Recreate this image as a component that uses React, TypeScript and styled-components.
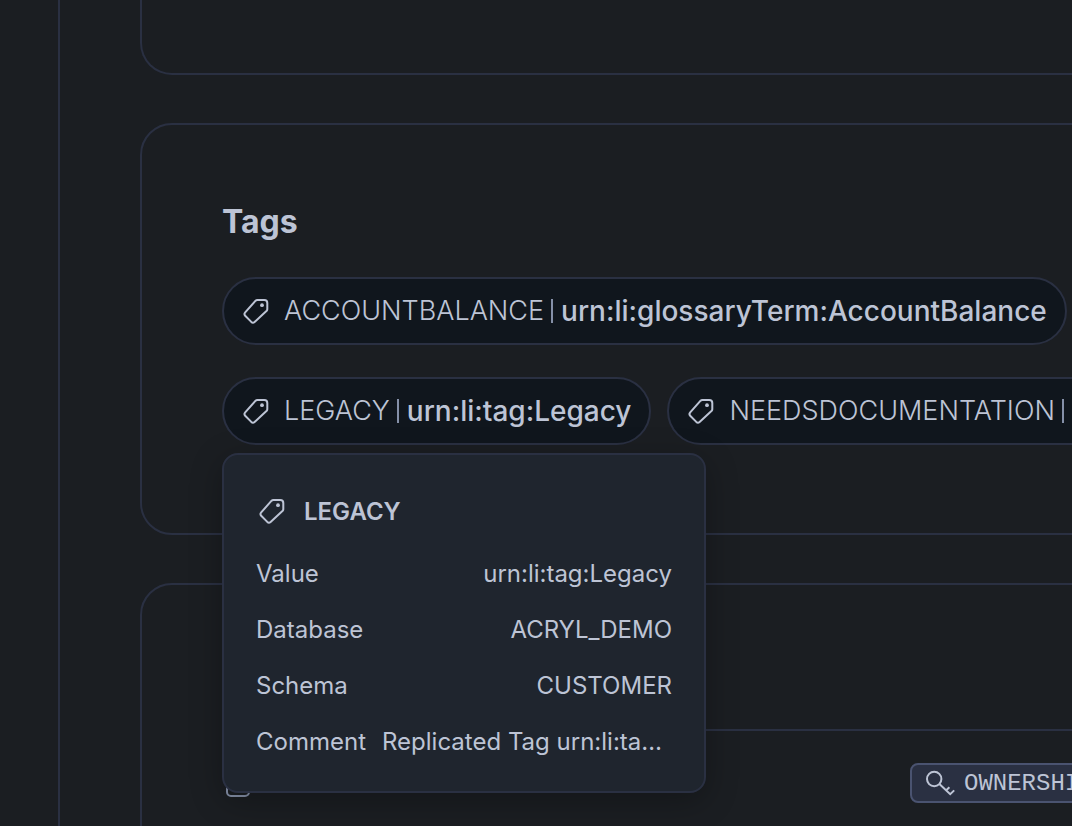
import React from 'react';
import styled, { createGlobalStyle } from 'styled-components';

const GlobalStyle = createGlobalStyle`
  *, *::before, *::after { box-sizing: border-box; }
  html, body, #root { height: 100%; }
  body {
    margin: 0;
    overflow: hidden;
    background: #1b1e22;
    color: #bdc4d5;
    font-family: Inter, "Liberation Sans", sans-serif;
  }
`;

const Shell = styled.div`
  display: grid;
  grid-template-columns: 60px minmax(0, 1fr);
  height: 100%;
  overflow: hidden;
`;

const Rail = styled.nav`
  border-right: 2px solid #2a3042;
`;

const Content = styled.main`
  display: flex;
  flex-direction: column;
  gap: 48px;
  padding-left: 80px;
  margin-right: -320px;
`;

const Card = styled.section<{ $cut?: 'top' }>`
  flex: none;
  border: 2px solid #2a3042;
  border-radius: 32px;
  ${({ $cut }) => $cut === 'top' && 'height: 75px; border-top: 0; border-radius: 0 0 32px 32px;'}
`;

const TagsCard = styled(Card)`
  padding: 76px 80px 88px;
`;

const PrivilegesCard = styled(Card)`
  padding: 0 80px 80px;
`;

const Title = styled.h2`
  margin: 0 0 34px;
  font-size: 32px;
  line-height: 42px;
  font-weight: 700;
`;

const TagRow = styled.div`
  display: flex;
  gap: 16px;
  & + & { margin-top: 32px; }
`;

const TagAnchor = styled.div`
  position: relative;
  flex: none;
`;

const Pill = styled.button`
  display: flex;
  align-items: center;
  height: 68px;
  padding: 0 18px;
  border: 2px solid #2a3042;
  border-radius: 34px;
  background: #10161d;
  color: inherit;
  font: inherit;
  white-space: nowrap;
`;

const PillName = styled.span`
  margin-left: 14px;
  font-size: 27px;
  line-height: 32px;
  font-weight: 300;
`;

const Divider = styled.span`
  width: 2px;
  height: 24px;
  margin: 0 8px 0 7px;
  background: #8590a8;
`;

const PillValue = styled.span`
  font-size: 28px;
  line-height: 32px;
  font-weight: 500;
`;

const Popover = styled.div`
  position: absolute;
  top: 76px;
  left: 0;
  z-index: 1;
  width: 484px;
  padding: 36px 32px 21px;
  border: 2px solid #2a3042;
  border-radius: 16px;
  background: #1f252e;
  box-shadow: 0 8px 32px rgba(0, 0, 0, 0.28);
`;

const PopoverTitle = styled.h3`
  display: flex;
  align-items: center;
  gap: 18px;
  height: 40px;
  margin: 0 0 15px;
  padding-left: 2px;
  font-size: 24px;
  font-weight: 600;
`;

const Details = styled.dl`
  margin: 0;
`;

const Detail = styled.div`
  display: flex;
  justify-content: space-between;
  gap: 16px;
  font-size: 24px;
  line-height: 56px;
`;

const Term = styled.dt`
  flex: none;
`;

const Value = styled.dd`
  margin: 0;
  min-width: 0;
  overflow: hidden;
  text-overflow: ellipsis;
  white-space: nowrap;
`;

const CardHeader = styled.header`
  height: 146px;
  border-bottom: 2px solid #2a3042;
`;

const PrivilegeRow = styled.div`
  display: grid;
  grid-template-columns: 684px 1fr;
  align-items: center;
  height: 104px;
  padding-left: 4px;
`;

const Privilege = styled.span`
  display: flex;
  width: max-content;
  align-items: center;
  gap: 8px;
  height: 40px;
  padding: 0 14px;
  border: 2px solid #4a5370;
  border-radius: 8px;
  background: #2a3042;
  font-family: "Liberation Mono", monospace;
  font-size: 24px;
`;

const TagIcon = () => (
  <svg width="28" height="28" viewBox="0 0 28 28" fill="none" aria-hidden="true">
    <path
      d="M15.3 3H22.3Q25.3 3 25.3 6V12.3Q25.3 13.1 24.7 13.7L12.6 25Q10.9 26.4 9.3 24.9L3.2 18.8Q1.7 17.1 3.2 15.4L13.6 3.7Q14.3 3 15.3 3Z"
      stroke="currentColor"
      strokeWidth="2"
      strokeLinejoin="round"
    />
    <circle cx="20" cy="8.2" r="1.9" fill="currentColor" />
  </svg>
);

const KeyIcon = () => (
  <svg width="30" height="26" viewBox="0 0 30 26" fill="none" stroke="currentColor" strokeWidth="2" aria-hidden="true">
    <circle cx="8.2" cy="9" r="7.2" />
    <path d="M13.4 14L24.2 24.2L28.2 20.4M20.2 20.2L23.4 17.2" />
  </svg>
);

const RoleIcon = () => (
  <svg width="24" height="28" viewBox="0 0 24 28" fill="none" stroke="#8590a8" strokeWidth="2" aria-hidden="true">
    <rect x="1" y="1" width="22" height="26" rx="4" />
  </svg>
);

const Tag = ({ name, value }: { name: string; value: string }) => (
  <Pill type="button">
    <TagIcon />
    <PillName>{name}</PillName>
    <Divider />
    <PillValue>{value}</PillValue>
  </Pill>
);

const details = [
  ['Value', 'urn:li:tag:Legacy'],
  ['Database', 'ACRYL_DEMO'],
  ['Schema', 'CUSTOMER'],
  ['Comment', 'Replicated Tag urn:li:tag:Legacy'],
];

export default function App() {
  return (
    <>
      <GlobalStyle />
      <Shell>
        <Rail />
        <Content>
          <Card $cut="top" />
          <TagsCard>
            <Title>Tags</Title>
            <TagRow>
              <Tag name="ACCOUNTBALANCE" value="urn:li:glossaryTerm:AccountBalance" />
            </TagRow>
            <TagRow>
              <TagAnchor>
                <Tag name="LEGACY" value="urn:li:tag:Legacy" />
                <Popover role="tooltip">
                  <PopoverTitle>
                    <TagIcon />
                    LEGACY
                  </PopoverTitle>
                  <Details>
                    {details.map(([term, value]) => (
                      <Detail key={term}>
                        <Term>{term}</Term>
                        <Value>{value}</Value>
                      </Detail>
                    ))}
                  </Details>
                </Popover>
              </TagAnchor>
              <Tag name="NEEDSDOCUMENTATION" value="urn:li:tag:NeedsDocumentation" />
            </TagRow>
          </TagsCard>
          <PrivilegesCard>
            <CardHeader />
            <PrivilegeRow>
              <RoleIcon />
              <Privilege>
                <KeyIcon />
                OWNERSHIP
              </Privilege>
            </PrivilegeRow>
          </PrivilegesCard>
        </Content>
      </Shell>
    </>
  );
}
